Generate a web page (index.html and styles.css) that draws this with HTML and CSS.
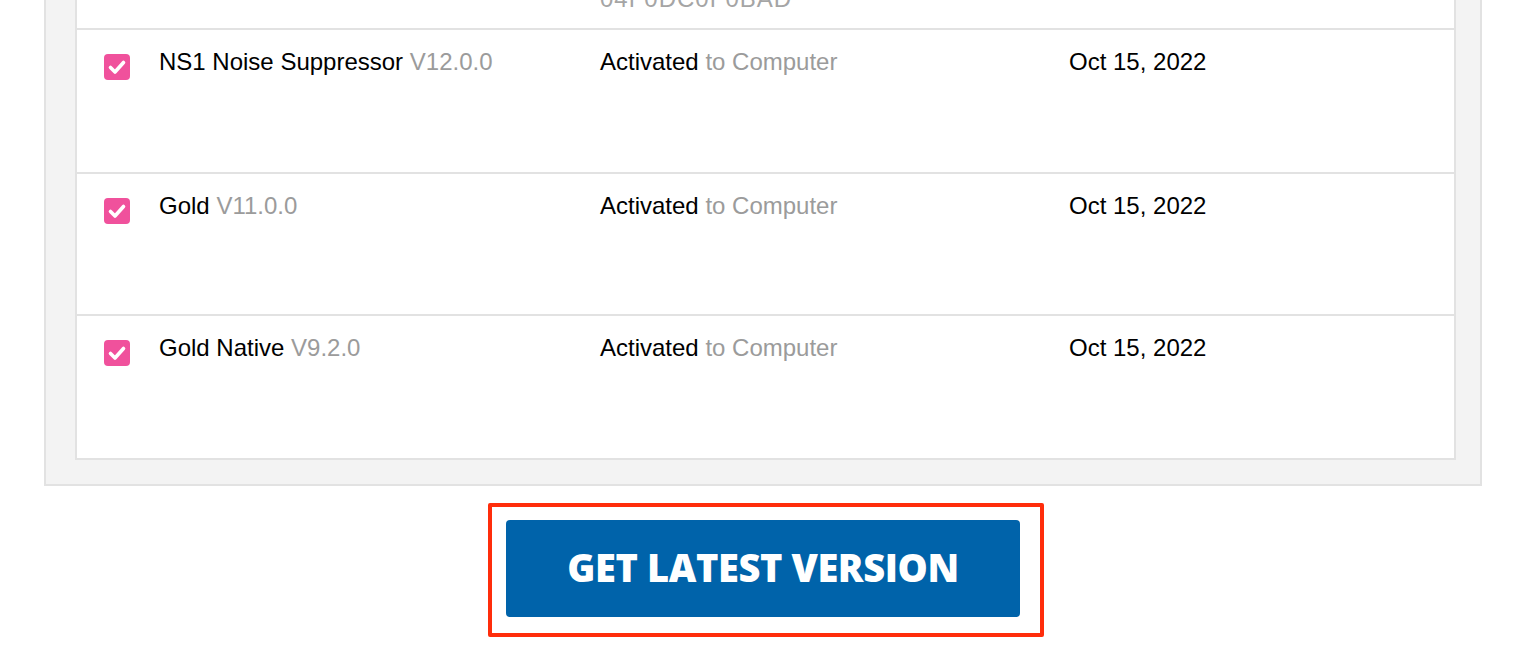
FILE: index.html
```html
<!DOCTYPE html>
<html lang="en">
<head>
<meta charset="utf-8">
<title>My Products</title>
<link rel="stylesheet" href="styles.css">
</head>
<body>
<main class="page">
  <section class="panel">
    <div class="table">
      <div class="row row-prev">
        <span class="check"></span>
        <div class="cell name"></div>
        <div class="cell activation">
          <div class="serial">04F0DC0F0BAD</div>
        </div>
        <div class="cell date"></div>
      </div>

      <div class="row">
        <span class="check"><svg viewBox="0 0 26 26" width="26" height="26"><rect width="26" height="26" rx="4" fill="#f0519c"/><path d="M6.5 13.5 L11 18 L19.5 8.5" fill="none" stroke="#fff" stroke-width="3.6" stroke-linecap="round" stroke-linejoin="round"/></svg></span>
        <div class="cell name">NS1 Noise Suppressor <span class="muted">V12.0.0</span></div>
        <div class="cell activation">Activated <span class="muted">to Computer</span></div>
        <div class="cell date">Oct 15, 2022</div>
      </div>

      <div class="row row-short">
        <span class="check"><svg viewBox="0 0 26 26" width="26" height="26"><rect width="26" height="26" rx="4" fill="#f0519c"/><path d="M6.5 13.5 L11 18 L19.5 8.5" fill="none" stroke="#fff" stroke-width="3.6" stroke-linecap="round" stroke-linejoin="round"/></svg></span>
        <div class="cell name">Gold <span class="muted">V11.0.0</span></div>
        <div class="cell activation">Activated <span class="muted">to Computer</span></div>
        <div class="cell date">Oct 15, 2022</div>
      </div>

      <div class="row">
        <span class="check"><svg viewBox="0 0 26 26" width="26" height="26"><rect width="26" height="26" rx="4" fill="#f0519c"/><path d="M6.5 13.5 L11 18 L19.5 8.5" fill="none" stroke="#fff" stroke-width="3.6" stroke-linecap="round" stroke-linejoin="round"/></svg></span>
        <div class="cell name">Gold Native <span class="muted">V9.2.0</span></div>
        <div class="cell activation">Activated <span class="muted">to Computer</span></div>
        <div class="cell date">Oct 15, 2022</div>
      </div>
    </div>
  </section>

  <div class="actions">
    <div class="highlight">
      <button class="btn-primary" type="button">GET LATEST VERSION</button>
    </div>
  </div>
</main>
</body>
</html>
```

FILE: styles.css
```css
html, body {
  margin: 0;
  padding: 0;
  background: #ffffff;
  overflow: hidden;
}

body {
  width: 1530px;
  height: 660px;
  font-family: "Liberation Sans", Arial, Helvetica, sans-serif;
  color: #000;
}

.page {
  margin-top: -116px;
}

.panel {
  margin-left: 44px;
  width: 1438px;
  box-sizing: border-box;
  background: #f3f3f3;
  border: 2px solid #e2e2e2;
  border-top: 0;
  padding: 0 24px 24px 29px;
}

.table {
  background: #fff;
  border: 2px solid #e2e2e2;
  border-top: 0;
}

.row {
  display: grid;
  grid-template-columns: 26px 470px 469px 1fr;
  height: 142px;
  padding-left: 27px;
  border-top: 2px solid #e2e2e2;
  font-size: 24px;
  line-height: 28px;
}

.row-short {
  height: 140px;
}

.row-prev {
  border-top: 0;
  height: 144px;
}

.check {
  display: block;
  width: 26px;
  height: 26px;
  margin-top: 24px;
}

.check svg {
  display: block;
}

.cell {
  padding-top: 18px;
}

.name {
  padding-left: 29px;
}

.muted {
  color: #9b9b9b;
}

.serial {
  margin-top: 83px;
  color: #a5a5a5;
  letter-spacing: 1px;
}

.actions {
  display: flex;
  justify-content: center;
  padding-left: 2px;
  margin-top: 17px;
}

.highlight {
  border: 4px solid #ff2d0b;
  border-radius: 2px;
  padding: 13px 20px 16px 14px;
}

.btn-primary {
  display: block;
  width: 514px;
  height: 97px;
  border: 0;
  border-radius: 4px;
  background: #0063aa;
  color: #fff;
  font-family: "Open Sans", "Noto Sans", sans-serif;
  font-weight: 800;
  font-size: 38px;
  letter-spacing: -0.4px;
  cursor: pointer;
  padding: 0 0 4px 0;
}
```
